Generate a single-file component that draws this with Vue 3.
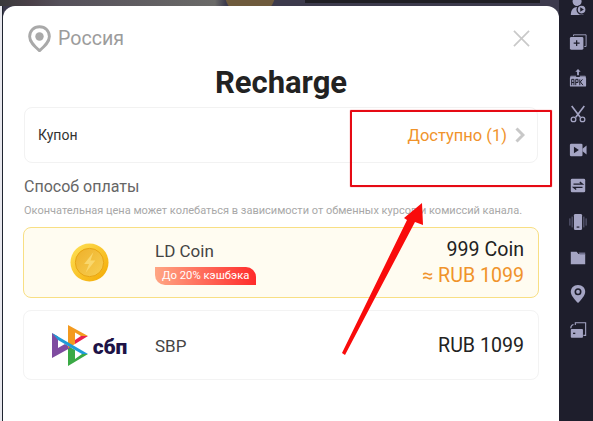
<template>
  <div class="screen">
    <div class="backdrop">
      <div class="modal">
        <div class="top-row">
          <div class="region">
            <svg class="pin" viewBox="0 0 24 28">
              <path d="M12 1.700C6 1.700 1.700 6 1.700 12c0 6 5.300 10.500 10.300 14.800 5-4.300 10.300-8.800 10.300-14.800C22.300 6 18 1.700 12 1.700z" fill="none" stroke="#a9a9a9" stroke-width="3" />
              <circle cx="12" cy="12" r="4.400" fill="#a9a9a9" />
            </svg>
            <span>Россия</span>
          </div>
          <svg class="close" viewBox="0 0 18 18">
            <path d="M1 1l16 16M17 1L1 17" stroke="#c9c9c9" stroke-width="1.800" fill="none" />
          </svg>
        </div>

        <h1 class="title">Recharge</h1>

        <div class="coupon">
          <span class="coupon-label">Купон</span>
          <div class="coupon-value">
            <span>Доступно (1)</span>
            <svg class="chevron" viewBox="0 0 10 16">
              <path d="M1.500 1.500L8 8l-6.500 6.500" fill="none" stroke="#c8c8c8" stroke-width="3" />
            </svg>
          </div>
        </div>

        <h2 class="section">Способ оплаты</h2>
        <p class="note">Окончательная цена может колебаться в зависимости от обменных курсов и комиссий канала.</p>

        <div class="pay pay-active">
          <div class="pay-logo">
            <svg class="coin" viewBox="0 0 40 40">
              <defs>
                <linearGradient id="coinRim" x1="0" y1="0" x2="1" y2="1">
                  <stop offset="0" stop-color="#ffe35a" />
                  <stop offset="1" stop-color="#f3a800" />
                </linearGradient>
                <linearGradient id="coinFace" x1="0" y1="0" x2="1" y2="1">
                  <stop offset="0" stop-color="#eeb02a" />
                  <stop offset="1" stop-color="#f7cf52" />
                </linearGradient>
              </defs>
              <circle cx="20" cy="20" r="19.500" fill="url(#coinRim)" />
              <circle cx="20" cy="20" r="14.500" fill="url(#coinFace)" stroke="#e6a312" stroke-width="1" />
              <path d="M24 9.500l-9.500 12h5L16 30.500 26 18h-5z" fill="#f9d76c" />
            </svg>
          </div>
          <div class="pay-name">
            <span>LD Coin</span>
            <span class="badge">До 20% кэшбэка</span>
          </div>
          <div class="pay-price">
            <span>999 Coin</span>
            <span class="approx">≈ RUB 1099</span>
          </div>
        </div>

        <div class="pay pay-plain">
          <div class="pay-logo">
            <div class="sbp">
              <svg class="sbp-mark" viewBox="0 0 36 41">
                <path d="M16 21l7 4v9l7-5h6L16 41z" fill="#3aa945" />
                <path d="M0 8l6 3.500V23l7-4 6 3.500L0 33z" fill="#7f4ca0" />
                <path d="M16 0l20 11h-7l-6-3.500V19l-7 4z" fill="#f39a1f" />
                <path d="M36 11L23 19v-4l6-4z" fill="#e8224f" />
                <path d="M0 8l36 21h-6l-7-4L6 15z" fill="#1f9bd7" />
              </svg>
              <span class="sbp-text">сбп</span>
            </div>
          </div>
          <div class="pay-name"><span>SBP</span></div>
          <div class="pay-price"><span>RUB 1099</span></div>
        </div>
      </div>
    </div>

    <div class="sidebar">
      <div class="slot first">
        <svg viewBox="0 0 20 20">
          <circle cx="9" cy="5" r="5" fill="#a5a5c4" />
          <path d="M2 20c0-6 3-9 7-9s7 3 7 9z" fill="#a5a5c4" />
          <circle cx="14" cy="14" r="5" fill="#a5a5c4" stroke="#1e1e2c" stroke-width="1.500" />
          <path d="M12.500 11.500l4 2.500-4 2.500z" fill="#1e1e2c" />
        </svg>
      </div>
      <div class="slot">
        <svg viewBox="0 0 20 20">
          <path d="M5 3.500V2h14v13h-2" fill="none" stroke="#a5a5c4" stroke-width="1" />
          <rect x="1" y="4.500" width="15" height="14" rx="1.500" fill="#a5a5c4" />
          <path d="M8.500 8v6.500M5.200 11.200h6.600" stroke="#1e1e2c" stroke-width="1.400" />
        </svg>
      </div>
      <div class="slot">
        <svg viewBox="0 0 20 20">
          <path d="M10 0l3 3h-2v4H9V3H7z" fill="#a5a5c4" />
          <path d="M2 7.500h6v1H1zM12 7.500h6l1 1h-7z" fill="#a5a5c4" />
          <rect x="1" y="9" width="18" height="10.500" rx="1" fill="#a5a5c4" />
          <path d="M3 18v-6.500h2.500V18M3 15h2.500M7.500 18v-6.500H10v3.500H7.500M12 11.500V18M12 15l3-3.500M12.800 14.500L15.500 18" fill="none" stroke="#1e1e2c" stroke-width="1.100" />
        </svg>
      </div>
      <div class="slot">
        <svg viewBox="0 0 20 20">
          <path d="M3 1l9.500 12.500M17 1L7.500 13.500" stroke="#a5a5c4" stroke-width="1.800" fill="none" />
          <circle cx="5" cy="16" r="2.600" fill="none" stroke="#a5a5c4" stroke-width="1.400" />
          <circle cx="15" cy="16" r="2.600" fill="none" stroke="#a5a5c4" stroke-width="1.400" />
        </svg>
      </div>
      <div class="slot">
        <svg viewBox="0 0 20 20">
          <rect x="1" y="3" width="14" height="14" rx="1.500" fill="#a5a5c4" />
          <path d="M15 8.500L19.500 5v10L15 11.500z" fill="#a5a5c4" />
          <path d="M5.500 6.500l5.500 3.500-5.500 3.500z" fill="#1e1e2c" />
        </svg>
      </div>
      <div class="slot">
        <svg viewBox="0 0 20 20">
          <rect x="2" y="2" width="16" height="15" rx="1.500" fill="#a5a5c4" />
          <path d="M5 8h10l-3-2.500M15 11.500H5l3 2.500" fill="none" stroke="#1e1e2c" stroke-width="1.400" />
        </svg>
      </div>
      <div class="slot">
        <svg viewBox="0 0 20 20">
          <rect x="5.500" y="1" width="9" height="18" rx="1.500" fill="#a5a5c4" />
          <rect x="8.500" y="15" width="3" height="1.300" fill="#1e1e2c" />
          <path d="M3.500 4v12M1 6v8M16.500 4v12M19 6v8" stroke="#6f6f8c" stroke-width="1" />
        </svg>
      </div>
      <div class="slot">
        <svg viewBox="0 0 20 20">
          <path d="M2 3h6.500l2 2.500H18V17H2z" fill="#a5a5c4" />
          <path d="M10.500 4h7.500v2h-6z" fill="#6f6f8c" />
        </svg>
      </div>
      <div class="slot">
        <svg viewBox="0 0 20 20">
          <path d="M10 0C5 0 2 3.500 2 7.500c0 4 4 8.500 8 12.500 4-4 8-8.500 8-12.500C18 3.500 15 0 10 0z" fill="#a5a5c4" />
          <circle cx="10" cy="7.500" r="3" fill="none" stroke="#1e1e2c" stroke-width="1.800" />
        </svg>
      </div>
      <div class="slot">
        <svg viewBox="0 0 20 20">
          <path d="M7 4.500V2h11.500v14H16" fill="none" stroke="#a5a5c4" stroke-width="1.200" />
          <rect x="2" y="9" width="13.500" height="9.500" rx="1" fill="#a5a5c4" />
          <path d="M2 8c0-2 1-3.500 3-4" fill="none" stroke="#a5a5c4" stroke-width="1.200" />
          <rect x="4.500" y="13" width="2.500" height="1.500" fill="#1e1e2c" />
        </svg>
      </div>
    </div>

    <!-- screenshot annotation on top of the dialog -->
    <div class="mark-box"></div>
    <svg class="mark-arrow" viewBox="0 0 593 421">
      <path d="M422 203L423 225 415 222 345 355 342 353 407 220 404 218z" fill="#f90b0b" />
    </svg>
  </div>
</template>

<script setup>
</script>

<style>
html,
body {
  margin: 0;
  overflow: hidden;
}
</style>

<style scoped>
.screen {
  position: relative;
  display: flex;
  width: 593px;
  height: 421px;
  overflow: hidden;
  font-family: Roboto, "Noto Sans", sans-serif;
}

.backdrop {
  flex: 1;
  min-width: 0;
  padding: 6px 0 0 3px;
  background:
    linear-gradient(90deg, #e8e8ee 0, #e8e8ee 2px, #1f2430 2px, #1f2430 3px),
    linear-gradient(#0000 0, #0000 255px, #f6d890 255px, #f6d890 325px, #0000 325px),
    linear-gradient(90deg, #1f1e24, #1f1e24),
    radial-gradient(circle at 250px -8px, #6e5a3c 0, #6e5a3c 25px, transparent 26px),
    linear-gradient(90deg, #3a3a3c 0, #4a4048 30px, #55505a 60px, #6a6a68 215px, #3c3a4c 226px),
    #3c3a4c;
  background-size: 3px 100%, 2px 100%, 235px 3px, 100% 100%, 100% 6px, 100% 100%;
  background-position: 0 6px, 0 0, 305px 0, 0 0, 0 0, 0 0;
  background-repeat: no-repeat;
}

.modal {
  height: 100%;
  box-sizing: border-box;
  padding: 19px 20px 0;
  background: #fff;
  border-radius: 12px 12px 0 0;
}

.top-row {
  display: flex;
  align-items: center;
  justify-content: space-between;
  height: 26px;
  padding-right: 9px;
}

.region {
  display: flex;
  align-items: center;
  gap: 7px;
  padding-left: 5px;
  color: #9c9c9c;
  font-size: 19.600px;
}

.pin {
  width: 23px;
  height: 27px;
}

.close {
  width: 17px;
  height: 17px;
}

.title {
  margin: 8px 0 0;
  height: 47px;
  color: #222;
  font-size: 31px;
  font-weight: 700;
  line-height: 47px;
  text-align: center;
}

.coupon {
  display: flex;
  align-items: center;
  justify-content: space-between;
  box-sizing: border-box;
  height: 56px;
  margin: 1px 1px 0;
  padding: 0 12px 0 13px;
  border: 1px solid #f2f2f2;
  border-radius: 8px;
}

.coupon-label {
  color: #333;
  font-size: 14px;
}

.coupon-value {
  display: flex;
  align-items: center;
  gap: 8px;
  color: #f0932b;
  font-size: 16.500px;
}

.chevron {
  width: 10px;
  height: 16px;
}

.section {
  margin: 14px 0 0 1px;
  color: #666;
  font-size: 16px;
  font-weight: 400;
  line-height: 20px;
}

.note {
  margin: 7px 0 0 1px;
  color: #a8a8a8;
  font-size: 11px;
  line-height: 14px;
  white-space: nowrap;
}

.pay {
  display: flex;
  align-items: center;
  box-sizing: border-box;
  padding-right: 14px;
  border: 1px solid #f3f3f3;
  border-radius: 8px;
  color: #444;
  font-size: 17px;
}

.pay-active {
  height: 71px;
  margin-top: 9px;
  background: #fffcf1;
  border-color: #f8df84;
}

.pay-plain {
  height: 70px;
  margin-top: 12px;
  padding-top: 1px;
}

.pay-logo {
  display: flex;
  align-items: center;
  justify-content: center;
  flex: none;
  width: 131px;
}

.coin {
  width: 39px;
  height: 39px;
}

.sbp {
  display: flex;
  align-items: center;
  gap: 5px;
}

.sbp-mark {
  width: 36px;
  height: 41px;
}

.sbp-text {
  margin-top: 3px;
  color: #1d1346;
  font-size: 21px;
  font-weight: 900;
  line-height: 1;
}

.pay-name {
  display: flex;
  flex-direction: column;
  align-items: flex-start;
  gap: 6px;
  flex: 1;
}

.badge {
  padding: 0 7px;
  background: linear-gradient(90deg, #ffa684, #ff2b2b);
  border-radius: 0 10px 0 10px;
  color: #fff;
  font-size: 11.300px;
  line-height: 18px;
}

.pay-price {
  display: flex;
  flex-direction: column;
  align-items: flex-end;
  gap: 3px;
  color: #222;
  font-size: 19.600px;
}

.approx {
  color: #f0932b;
}

.sidebar {
  display: flex;
  flex-direction: column;
  flex: none;
  width: 34px;
  background: #1e1e2c;
}

.slot {
  display: flex;
  align-items: center;
  justify-content: center;
  flex: none;
  height: 36px;
  padding-left: 3px;
}

.slot.first {
  margin-top: -12px;
}

.slot svg {
  width: 18px;
  height: 18px;
}

.mark-box {
  position: absolute;
  left: 350px;
  top: 110px;
  width: 202px;
  height: 77px;
  box-sizing: border-box;
  border: 2px solid #e60a14;
  border-radius: 1px;
  box-shadow: 0 0 1px #e60a14;
}

.mark-arrow {
  position: absolute;
  left: 0;
  top: 0;
  width: 593px;
  height: 421px;
  pointer-events: none;
}
</style>
